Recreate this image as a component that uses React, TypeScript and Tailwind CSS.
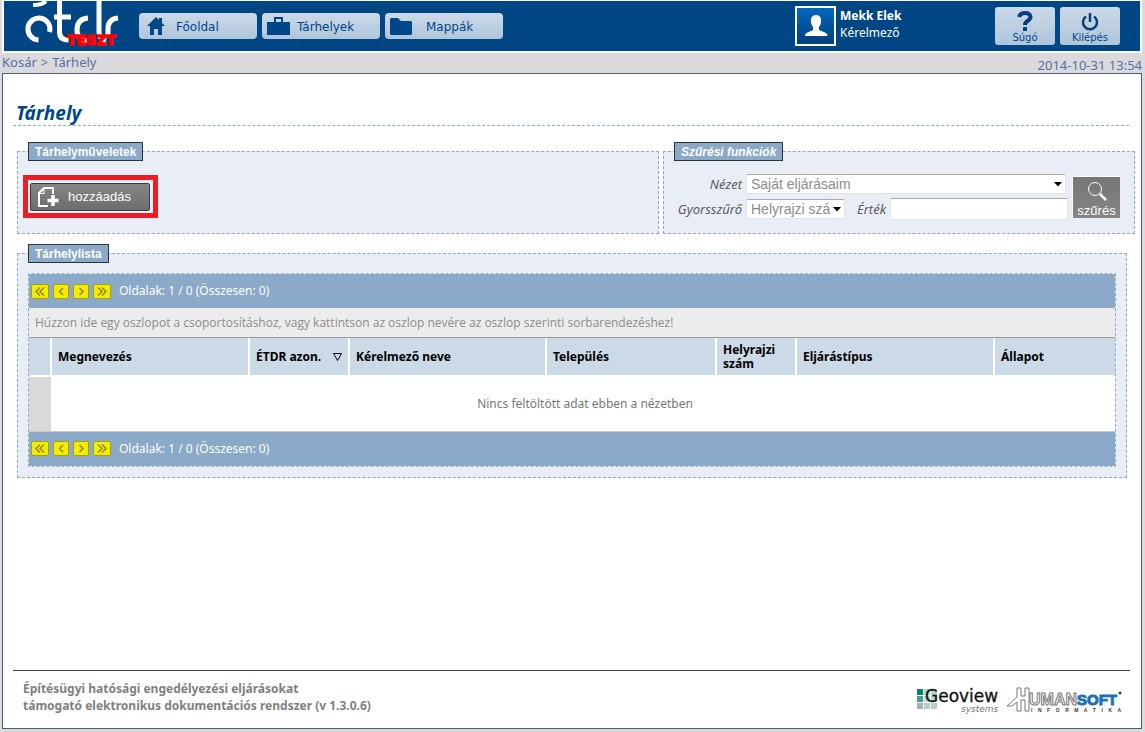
import { useState } from "react"

const navItems = [
  { label: "Főoldal", icon: <HomeIcon />, gap: "gap-[11px]" },
  { label: "Tárhelyek", icon: <BriefcaseIcon />, gap: "gap-[7px]" },
  { label: "Mappák", icon: <FolderIcon />, gap: "gap-3.5" },
]

const columns = [
  { label: "Megnevezés", width: "w-[198px]" },
  { label: "ÉTDR azon.", width: "w-[100px]", sorted: true },
  { label: "Kérelmező neve", width: "w-[197px]" },
  { label: "Település", width: "w-[170px]" },
  { label: "Helyrajzi szám", width: "w-[80px]" },
  { label: "Eljárástípus", width: "w-[198px]" },
  { label: "Állapot", width: "" },
]

const pagerButtons = [
  { label: "Első oldal", width: "w-[18px]", path: "M9 3.5 5 7.5 9 11.5M13 3.5 9 7.5 13 11.5" },
  { label: "Előző oldal", width: "w-4", path: "M11 4 7.5 7.5 11 11" },
  { label: "Következő oldal", width: "w-4", path: "M7.500 4 11 7.500 7.500 11" },
  { label: "Utolsó oldal", width: "w-[18px]", path: "M5 3.5 9 7.5 5 11.5M9 3.5 13 7.5 9 11.5" },
]

function HomeIcon() {
  return (
    <svg width="18" height="18" viewBox="0 0 18 18" fill="#00478a">
      <path d="M9 0 0 9h3v9h4v-6h4v6h4V9h3l-3-3V1h-3v2z" />
    </svg>
  )
}

function BriefcaseIcon() {
  return (
    <svg width="23" height="18" viewBox="0 0 23 18" fill="#00478a">
      <path d="M7 5V0h9v5h7v13H0V5zM9 5h5V2H9z" fillRule="evenodd" />
    </svg>
  )
}

function FolderIcon() {
  return (
    <svg width="22" height="17" viewBox="0 0 22 17" fill="#00478a">
      <path d="M1 0h7l3 3h10l1 1v12l-1 1H1l-1-1V1z" />
    </svg>
  )
}

function Logo() {
  return (
    <svg width="100" height="50" viewBox="0 0 100 50" role="img" aria-label="étdr">
      <g fill="none" stroke="#fff" strokeWidth="5">
        <path d="M25.500 31A11 11 0 1 0 14.500 39" />
        <path d="M9 4q9 0 13-4" strokeWidth="4" />
        <path d="M35.500 0v31q0 8 9 8M30 16h17" />
        <path d="M64 17q-11 1-11 12 0 10 10 11" />
        <path d="M75 0v31q0 7 7 8.500" />
        <path d="M94 17q-10 1-10 11V36" />
      </g>
      <text x="43" y="44" fontSize="14" fontWeight="900" fill="#f00" stroke="#f00" strokeWidth="1.500" className="font-['DejaVu_Sans',sans-serif]">
        TESZT
      </text>
    </svg>
  )
}

function UserIcon() {
  return (
    <svg width="36" height="36" viewBox="0 0 36 36" fill="#fff">
      <path d="M18 7c4 0 5.500 3 5 7-.3 3-1.500 4-2 5v3l7 3q1.500 1 1.500 3H7q0-2 1.500-3l6.500-3v-3c-.5-1-1.700-2-2-5-.5-4 1-7 5-7z" />
    </svg>
  )
}

function AddIcon() {
  return (
    <svg width="22" height="20" viewBox="0 0 22 20" fill="none" stroke="#fff" strokeWidth="2">
      <path d="M10 19H1V6l5-5h9v6" />
      <path d="M1 6.500h5V1" strokeWidth="1" />
      <path d="M15 8v11M9.500 13.500h11" strokeWidth="3.500" />
    </svg>
  )
}

function Pager({ edge }: { edge: string }) {
  return (
    <div className={`flex h-[35px] items-center gap-1 border-dashed border-[#e9eef6] bg-[#8ba9c8] pl-0.5 ${edge}`}>
      {pagerButtons.map((b) => (
        <button
          key={b.label}
          aria-label={b.label}
          className={`flex h-[15px] items-center justify-center rounded-[2px] border border-[#a89f10] bg-[#f4ec00] ${b.width}`}
        >
          <svg width="18" height="15" viewBox="0 0 18 15" className="shrink-0" fill="none" stroke="#8a8200" strokeWidth="1.4">
            <path d={b.path} />
          </svg>
        </button>
      ))}
      <span className="pl-1 text-xs text-white">Oldalak: 1 / 0 (Összesen: 0)</span>
    </div>
  )
}

function Legend({ children, italic }: { children: string; italic?: boolean }) {
  return (
    <legend
      className={`ml-2.5 h-[19px] border border-[#333] bg-[#8ba9c8] px-1.5 font-['Liberation_Sans',Arial,sans-serif] text-xs leading-[18px] font-bold text-white ${italic ? "italic" : ""}`}
    >
      {children}
    </legend>
  )
}

function Arrow() {
  return (
    <svg width="8" height="5" viewBox="0 0 8 5" className="pointer-events-none absolute top-2 right-1">
      <path d="M0 0h8L4 4.500z" />
    </svg>
  )
}

export default function App() {
  const [view, setView] = useState("Saját eljárásaim")
  const [quick, setQuick] = useState("Helyrajzi szám")
  const [value, setValue] = useState("")

  const field =
    "w-full appearance-none rounded-[2px] border border-[#dfe3ea] border-t-[#a9abb0] bg-white px-1 font-['Liberation_Sans',Arial,sans-serif] text-sm leading-[18px] text-[#8c8c8c] not-italic"

  return (
    <div className="flex min-h-screen flex-col bg-[#dad9dc] pr-[3px] pb-[3px] pl-0.5 font-['Noto_Sans',Tahoma,sans-serif]">
      <header className="flex h-[53px] border-2 border-t border-white bg-[#004685] pr-5 pl-5">
        <Logo />
        <nav className="ml-[15px] flex items-start gap-[5px] pt-3">
          {navItems.map((item) => (
            <a
              key={item.label}
              href="#"
              className={`flex h-[26px] w-[118px] items-center rounded-[4px] bg-linear-to-b from-[#cbdae8] to-[#afc5db] font-['DejaVu_Sans',Verdana,sans-serif] text-xs text-[#00478a] first:pl-2 not-first:pl-[5px] ${item.gap}`}
            >
              {item.icon}
              <span className="pt-0.5">{item.label}</span>
            </a>
          ))}
        </nav>
        <div className="ml-auto flex items-start gap-1 pt-[5px] text-white">
          <div className="flex h-10 w-[41px] items-center justify-center border-2 border-white bg-linear-to-b from-[#0368bd] to-[#02407c]">
            <UserIcon />
          </div>
          <div className="w-[155px] pt-px text-xs leading-[17px]">
            <p className="font-bold">Mekk Elek</p>
            <p>Kérelmező</p>
          </div>
        </div>
        <div className="flex gap-[5px] pt-1.5 font-['DejaVu_Sans',Verdana,sans-serif] text-[10px] text-[#00478a]">
          <button className="flex h-[38px] w-[60px] flex-col items-center justify-end rounded-[3px] bg-linear-to-b from-[#cbdae8] to-[#afc5db] leading-[14px]">
            <svg width="16" height="20" viewBox="0 0 16 20" fill="none" stroke="#083f7d" strokeWidth="4">
              <path d="M2 6q1-4 6-4t5.500 4q0 2-3 4-2.500 1.500-2.500 4M8 16v4" />
            </svg>
            Súgó
          </button>
          <button className="flex h-[38px] w-[60px] flex-col items-center justify-end rounded-[3px] bg-linear-to-b from-[#cbdae8] to-[#afc5db] leading-[14px]">
            <svg width="18" height="20" viewBox="0 0 18 20" fill="none" stroke="#083f7d" strokeWidth="2.500">
              <path d="M5 5.500a7 7 0 1 0 8 0M9 2v9" />
            </svg>
            Kilépés
          </button>
        </div>
      </header>

      <div className="flex h-5 justify-between text-[13px] text-[#5672a6]">
        <nav className="flex gap-1 leading-[18px]">
          <a href="#">Kosár</a>
          <span>&gt;</span>
          <a href="#">Tárhely</a>
        </nav>
        <time className="leading-6">2014-10-31 13:54</time>
      </div>

      <main className="flex flex-1 flex-col border border-[#455f7c] bg-white pt-[25px]">
        <h1 className="mr-3 ml-2.5 border-b border-dashed border-[#8ba9c8] pt-0.5 pl-[3px] text-[19px] leading-6 font-bold text-[#00478a] italic">
          Tárhely
        </h1>

        <div className="mt-4 mr-1.5 ml-3.5 flex gap-1">
          <fieldset className="h-[92px] flex-1 border border-dashed border-[#8ba9c8] bg-[#e9eef6]">
            <Legend>Tárhelyműveletek</Legend>
            <div className="mt-3.5 ml-[5px] h-[43px] w-[135px] border-5 border-[#ee1c25] bg-[#e9eef6] px-0.5 pt-[3px]">
              <button className="flex h-[28px] w-[120px] items-center gap-2 rounded-[2px] border border-[#3c3c3c] bg-linear-to-b from-[#858585] to-[#6d6d6d] pl-[7px] font-['Liberation_Sans',Arial,sans-serif] text-[13px] text-white">
                <AddIcon />
                hozzáadás
              </button>
            </div>
          </fieldset>
          <fieldset className="h-[92px] w-[472px] border border-dashed border-[#8ba9c8] bg-[#e9eef6]">
            <Legend italic>Szűrési funkciók</Legend>
            <form className="mt-[13px] flex gap-1 pl-[11px] text-[13px] leading-5 text-[#5b5b5b] italic">
              <div className="flex w-[393px] flex-col gap-1">
                <div className="flex items-center gap-1">
                  <label htmlFor="view" className="w-[67px] text-right">
                    Nézet
                  </label>
                  <div className="relative h-5 w-[320px]">
                    <select id="view" value={view} onChange={(e) => setView(e.target.value)} className={`${field} h-5`}>
                      <option>Saját eljárásaim</option>
                    </select>
                    <Arrow />
                  </div>
                </div>
                <div className="flex items-center gap-1">
                  <label htmlFor="quick" className="w-[67px] text-right">
                    Gyorsszűrő
                  </label>
                  <div className="relative h-5 w-[99px]">
                    <select id="quick" value={quick} onChange={(e) => setQuick(e.target.value)} className={`${field} h-5 pr-3`}>
                      <option value="Helyrajzi szám">Helyrajzi szá</option>
                    </select>
                    <Arrow />
                  </div>
                  <label htmlFor="value" className="ml-2">
                    Érték
                  </label>
                  <input id="value" value={value} onChange={(e) => setValue(e.target.value)} className={`${field} h-[22px] min-w-0 flex-1`} />
                </div>
              </div>
              <button
                type="button"
                className="mt-0.5 flex h-[42px] w-12 flex-col items-center justify-between border-t border-l border-white bg-linear-to-b from-[#767676] to-[#868686] pt-1 font-['Liberation_Sans',Arial,sans-serif] text-[13px] leading-[15px] text-white not-italic"
              >
                <svg width="20" height="20" viewBox="0 0 20 20" fill="none" stroke="#fff" className="shrink-0">
                  <circle cx="8" cy="8" r="6.500" />
                  <path d="m13 13 6 6" strokeWidth="2.500" />
                </svg>
                szűrés
              </button>
            </form>
          </fieldset>
        </div>

        <fieldset className="mt-2.5 mr-3.5 ml-3.5 border border-dashed border-[#8ba9c8] bg-[#e9eef6] pb-2.5">
          <Legend>Tárhelylista</Legend>
          <div className="mx-2.5 mt-2.5 border-x border-dashed border-[#8ba9c8]">
            <Pager edge="border-t" />
            <p className="border-b border-[#999] bg-[#ececec] pl-1.5 font-['Open_Sans',Tahoma,sans-serif] text-xs leading-[29px] text-[#8c8c8c]">
              Húzzon ide egy oszlopot a csoportosításhoz, vagy kattintson az oszlop nevére az oszlop szerinti sorbarendezéshez!
            </p>
            <table className="w-full table-fixed border-collapse bg-white text-xs">
              <thead>
                <tr className="h-[38px] bg-[#ccd9e6] text-left leading-[14px]">
                  <th className="w-[22px]" />
                  {columns.map((c) => (
                    <th key={c.label} className={`border-l-2 border-white px-1.5 pt-px font-bold ${c.width}`}>
                      {c.sorted ? (
                        <div className="flex items-center justify-between whitespace-nowrap">
                          {c.label}
                          <svg width="9" height="8" viewBox="0 0 9 8" fill="none" stroke="#000" className="shrink-0">
                            <path d="M.5.5h8l-4 7z" />
                          </svg>
                        </div>
                      ) : (
                        c.label
                      )}
                    </th>
                  ))}
                </tr>
              </thead>
              <tbody>
                <tr className="h-[55px] border-t-2 border-b border-t-white border-b-[#c8c8c8]">
                  <td className="bg-[#d9d9d9]" />
                  <td colSpan={7} className="pt-px pl-1 text-center text-[#777]">
                    Nincs feltöltött adat ebben a nézetben
                  </td>
                </tr>
              </tbody>
            </table>
            <Pager edge="border-b" />
          </div>
        </fieldset>

        <footer className="mt-auto mr-[11px] ml-2.5 flex h-[58px] justify-between border-t border-[#444] pt-2 pr-2 pl-2.5">
          <p className="pt-px text-xs leading-[17px] font-bold text-[#808080]">
            Építésügyi hatósági engedélyezési eljárásokat
            <br />
            támogató elektronikus dokumentációs rendszer (v 1.3.0.6)
          </p>
          <div className="flex gap-1 pt-1">
            <svg width="86" height="32" viewBox="0 -4 86 32" role="img" aria-label="Geoview systems">
              <path d="M1 2h6v6H1z" fill="#008573" />
              <path d="M8 2h6v6H8zM15 2h6v6h-6z" fill="#a8d8cc" />
              <path d="M1 9h6v6H1z" fill="#4b9c92" />
              <path d="M8 9h6v6H8zM15 9h6v6h-6z" fill="#b5ddd0" />
              <path d="M1 16h6v6H1z" fill="#9bb5bb" />
              <path d="M8 16h6v6H8zM15 16h6v6h-6z" fill="#b3d0ce" />
              <text x="9" y="15" fontSize="17" fill="#111" stroke="#111" strokeWidth=".3" className="font-['DejaVu_Sans',sans-serif]">
                Geoview
              </text>
              <text x="45" y="25" fontSize="9" fill="#66787c" fontStyle="italic" className="font-['DejaVu_Sans',sans-serif]">
                systems
              </text>
            </svg>
            <svg width="116" height="32" viewBox="0 -4 116 32" role="img" aria-label="HumanSoft Informatika">
              <path d="M1 19 11 10V1h4v8h4V1h4v23h-4V13h-4v11h-4v-9l-5 4z" fill="#fff" stroke="#777" />
              <text x="23" y="18" fontSize="16" fontWeight="bold" fill="#fff" stroke="#777" className="font-['Liberation_Sans',Arial,sans-serif]">
                UMAN
              </text>
              <text x="71" y="18" fontSize="15" fontWeight="bold" fill="#1d70b4" stroke="#1d70b4" className="font-['Liberation_Sans',Arial,sans-serif]">
                SOFT
              </text>
              <circle cx="114" cy="6" r="1.500" fill="#1d3f66" />
              <text x="25" y="25" fontSize="5" fontWeight="bold" fill="#333" className="font-['Liberation_Sans',Arial,sans-serif] whitespace-pre">
                {"INFORMATIKA".split("").join("    ")}
              </text>
            </svg>
          </div>
        </footer>
      </main>
    </div>
  )
}
